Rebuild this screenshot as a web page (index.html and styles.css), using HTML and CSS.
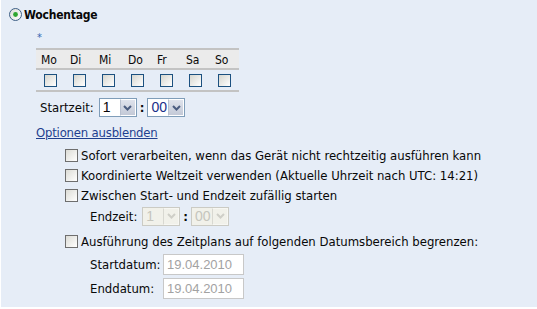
FILE: index.html
```html
<!DOCTYPE html>
<html>

<head>
    <meta charset="UTF-8">
    <title>Wochentage</title>
    <link rel="stylesheet" href="styles.css">
</head>

<body>
    <div class="panel">
        <div class="head">
            <svg class="radio" width="13" height="13" viewBox="0 0 13 13">
                <defs>
                    <linearGradient id="rg" x1="0" y1="0" x2="1" y2="1">
                        <stop offset="0" stop-color="#dcdcd6" />
                        <stop offset="1" stop-color="#ffffff" />
                    </linearGradient>
                </defs>
                <circle cx="6.5" cy="6.5" r="6" fill="url(#rg)" stroke="#3d5f86" stroke-width="1" />
                <circle cx="6.5" cy="6.5" r="2.4" fill="#2fa52f" />
            </svg>
            <span class="title">Wochentage</span>
        </div>

        <div class="content">
            <div class="req">*</div>

            <table class="days">
                <tr class="names">
                    <td>Mo</td><td>Di</td><td>Mi</td><td>Do</td><td>Fr</td><td>Sa</td><td>So</td>
                </tr>
                <tr class="checks">
                    <td><span class="cb"></span></td>
                    <td><span class="cb"></span></td>
                    <td><span class="cb"></span></td>
                    <td><span class="cb"></span></td>
                    <td><span class="cb"></span></td>
                    <td><span class="cb"></span></td>
                    <td><span class="cb"></span></td>
                </tr>
            </table>

            <div class="time-row">
                <span class="lbl">Startzeit:</span>
                <span class="sel"><span class="val">1</span><span class="arr"><svg width="9" height="6" viewBox="0 0 9 6"><path d="M1 1 L4.5 4.5 L8 1" fill="none" stroke="#4b5d80" stroke-width="2" /></svg></span></span>
                <span class="colon">:</span>
                <span class="sel"><span class="val focus">00</span><span class="arr"><svg width="9" height="6" viewBox="0 0 9 6"><path d="M1 1 L4.5 4.5 L8 1" fill="none" stroke="#4b5d80" stroke-width="2" /></svg></span></span>
            </div>

            <a class="toggle" href="#">Optionen ausblenden</a>

            <div class="options">
                <div class="opt"><span class="cb2"></span>Sofort verarbeiten, wenn das Gerät nicht rechtzeitig ausführen kann</div>
                <div class="opt"><span class="cb2"></span>Koordinierte Weltzeit verwenden (Aktuelle Uhrzeit nach UTC: 14:21)</div>
                <div class="opt"><span class="cb2"></span>Zwischen Start- und Endzeit zufällig starten</div>
                <div class="sub end-row">
                    <span class="lbl">Endzeit:</span>
                    <span class="sel off"><span class="val">1</span><span class="arr"><svg width="9" height="6" viewBox="0 0 9 6"><path d="M1 1 L4.5 4.5 L8 1" fill="none" stroke="#cfcfc8" stroke-width="2" /></svg></span></span>
                    <span class="colon">:</span>
                    <span class="sel off"><span class="val">00</span><span class="arr"><svg width="9" height="6" viewBox="0 0 9 6"><path d="M1 1 L4.5 4.5 L8 1" fill="none" stroke="#cfcfc8" stroke-width="2" /></svg></span></span>
                </div>
                <div class="opt opt4"><span class="cb2"></span>Ausführung des Zeitplans auf folgenden Datumsbereich begrenzen:</div>
                <div class="sub date-row">
                    <span class="dlbl">Startdatum:</span>
                    <span class="date">19.04.2010</span>
                </div>
                <div class="sub date-row">
                    <span class="dlbl">Enddatum:</span>
                    <span class="date">19.04.2010</span>
                </div>
            </div>
        </div>
    </div>
</body>

</html>
```

FILE: styles.css
```css
* {
    margin: 0;
    padding: 0;
    box-sizing: border-box;
}

body {
    background: #ffffff;
    font-family: "DejaVu Sans Condensed", "DejaVu Sans", sans-serif;
    font-size: 13px;
    color: #080808;
}

.panel {
    margin-left: 1px;
    height: 307px;
    background: #e6edf7;
    padding: 8px 0 0 8px;
}

.head {
    display: flex;
    align-items: center;
    height: 13px;
}

.radio {
    display: block;
    margin-right: 2px;
}

.title {
    font-weight: bold;
    font-size: 12px;
    letter-spacing: -0.2px;
}

.content {
    margin-left: 27px;
}

.req {
    color: #3567b0;
    font-size: 11px;
    height: 26px;
    padding-top: 10px;
    padding-left: 1px;
    line-height: 14px;
}

/* day table */
.days {
    border-collapse: collapse;
    width: 203px;
    margin-top: 1px;
    font-size: 12px;
}

.days td {
    width: 29px;
    padding: 0;
}

.names td {
    background: #ebebeb;
    border-top: 2px solid #c3c3c3;
    border-bottom: 2px solid #c3c3c3;
    height: 20px;
    padding-left: 5px;
    padding-top: 2px;
}

.checks td {
    border-bottom: 2px solid #c3c3c3;
    height: 22px;
    text-align: center;
}

.cb {
    display: inline-block;
    width: 13px;
    height: 13px;
    border: 1px solid #1c5180;
    background: linear-gradient(135deg, #d6d6cf, #ffffff);
    vertical-align: middle;
}

/* selects */
.time-row {
    display: flex;
    align-items: center;
    height: 19px;
    margin-top: 6px;
    margin-left: 4px;
}

.lbl {
    margin-right: 5px;
}

.colon {
    font-weight: bold;
    margin: 0 3px;
}

.sel {
    display: inline-flex;
    width: 38px;
    height: 19px;
    border: 1px solid #7f9db9;
    background: #ffffff;
}

.val {
    flex: 1;
    font-family: "Liberation Sans", Arial, sans-serif;
    font-size: 14px;
    line-height: 17px;
    padding-left: 3px;
}

.val.focus {
    color: #1a2f8a;
}

.arr {
    width: 16px;
    background: linear-gradient(#dfe3ec, #c3c9d7);
    border: 1px solid #ffffff;
    border-left-color: #b8c0cf;
    display: flex;
    align-items: center;
    justify-content: center;
}

.sel.off {
    background: #f1f1ea;
    border-color: #cbcbc4;
}

.sel.off .val {
    color: #c5c5bd;
}

.sel.off .arr {
    background: #f1f1ea;
    border: 1px solid #f7f7f3;
    border-left-color: #d8d8d1;
}

.toggle {
    display: inline-block;
    color: #1f3f8f;
    text-decoration: underline;
    margin-top: 8px;
    line-height: 15px;
    letter-spacing: -0.2px;
}

/* options */
.options {
    margin-left: 29px;
    margin-top: 5px;
}

.opt {
    display: flex;
    align-items: center;
    height: 20px;
}

.cb2 {
    display: inline-block;
    width: 13px;
    height: 13px;
    border: 1px solid #6e6e6e;
    background: linear-gradient(135deg, #dcdcd6, #ffffff);
    margin-right: 3px;
}

.sub {
    display: flex;
    align-items: center;
    padding-left: 25px;
}

.end-row {
    height: 22px;
    margin-bottom: 3px;
}

.opt4 {
    height: 22px;
}

.date-row {
    height: 24px;
}

.dlbl {
    width: 73px;
}

.date {
    display: inline-block;
    width: 81px;
    height: 21px;
    border: 1px solid #c8c8c8;
    background: #ffffff;
    color: #a2a2a2;
    font-family: "Liberation Sans", Arial, sans-serif;
    font-size: 13px;
    line-height: 19px;
    padding-left: 3px;
}
```
